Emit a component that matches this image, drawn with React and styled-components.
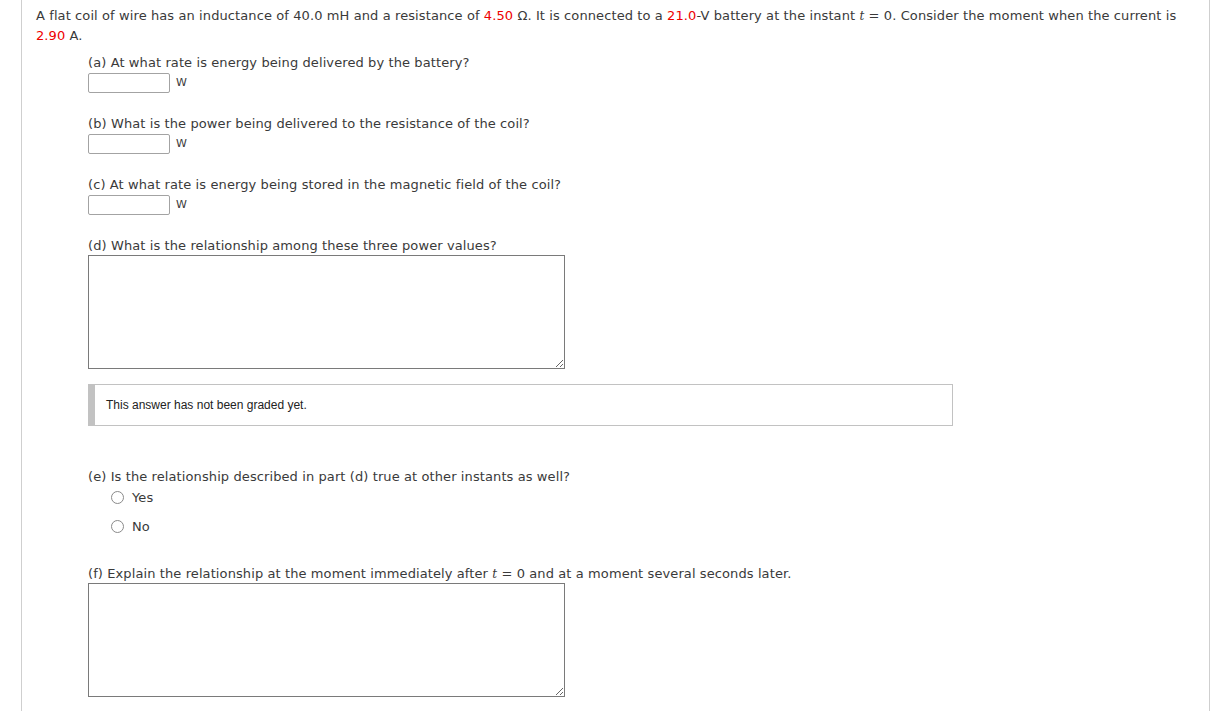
import React from "react";
import styled, { createGlobalStyle } from "styled-components";

const Global = createGlobalStyle`
  html, body { margin: 0; padding: 0; background: #fff; }
  body { font-family: Verdana, "DejaVu Sans", sans-serif; }
`;

const Page = styled.div`
  margin-left: 21px;
  width: 1189px;
  min-height: 711px;
  border-left: 1px solid #cfcfcf;
  border-right: 1px solid #cfcfcf;
  padding: 6px 24px 0 14px;
  box-sizing: border-box;
  font-size: 13px;
  line-height: 20px;
  letter-spacing: 0.1px;
  color: #3a3a3a;
`;

const Intro = styled.p`
  margin: 0;
`;

const Red = styled.span`
  color: #ee0000;
`;

const Ital = styled.i`
  font-style: italic;
  font-family: "DejaVu Serif", serif;
  font-size: 12px;
`;

const Parts = styled.div`
  margin: 7px 0 0 52px;
  display: flex;
  flex-direction: column;
`;

const Part = styled.div`
  margin-bottom: ${(p) => p.$gap ?? 21}px;
`;

const Label = styled.div`
  height: 20px;
`;

const AnswerRow = styled.div`
  display: flex;
  align-items: center;
  gap: 6px;
  height: 20px;
`;

const NumInput = styled.input`
  width: 82px;
  height: 20px;
  box-sizing: border-box;
  border: 1px solid #a3a3a3;
  border-radius: 2px;
  padding: 0 3px;
  margin: 0;
  font: inherit;
`;

const Unit = styled.span`
  font-size: 11px;
`;

const Essay = styled.textarea`
  display: block;
  width: 477px;
  height: 114px;
  box-sizing: border-box;
  border: 1px solid #7a7a7a;
  margin: -1px 0 0;
  padding: 2px;
  font: inherit;
  resize: both;
`;

const Graded = styled.div`
  margin-top: 15px;
  width: 865px;
  height: 42px;
  box-sizing: border-box;
  border: 1px solid #c2c2c2;
  border-left: 7px solid #c2c2c2;
  display: flex;
  align-items: center;
  padding-left: 11px;
  font-family: "Liberation Sans", Arial, sans-serif;
  font-size: 12px;
  letter-spacing: 0;
  color: #222;
`;

const Options = styled.div`
  display: flex;
  flex-direction: column;
  padding-left: 23px;
`;

const Option = styled.label`
  display: flex;
  align-items: center;
  gap: 8px;
  height: 29px;
  margin-top: ${(p) => (p.$first ? "-4px" : "0")};
`;

const Radio = styled.span`
  width: 11px;
  height: 11px;
  border: 1px solid #8a8a8a;
  border-radius: 50%;
  background: #fff;
  flex: none;
`;

export default function App() {
  return (
    <>
      <Global />
      <Page>
        <Intro>
          A flat coil of wire has an inductance of 40.0 mH and a resistance of <Red>4.50</Red> Ω. It is
          connected to a <Red>21.0</Red>-V battery at the instant <Ital>t</Ital> = 0. Consider the moment
          when the current is <Red>2.90</Red> A.
        </Intro>
        <Parts>
          <Part>
            <Label>(a) At what rate is energy being delivered by the battery?</Label>
            <AnswerRow>
              <NumInput type="text" />
              <Unit>W</Unit>
            </AnswerRow>
          </Part>
          <Part>
            <Label>(b) What is the power being delivered to the resistance of the coil?</Label>
            <AnswerRow>
              <NumInput type="text" />
              <Unit>W</Unit>
            </AnswerRow>
          </Part>
          <Part>
            <Label>(c) At what rate is energy being stored in the magnetic field of the coil?</Label>
            <AnswerRow>
              <NumInput type="text" />
              <Unit>W</Unit>
            </AnswerRow>
          </Part>
          <Part $gap={41}>
            <Label>(d) What is the relationship among these three power values?</Label>
            <Essay />
            <Graded>This answer has not been graded yet.</Graded>
          </Part>
          <Part $gap={23}>
            <Label>(e) Is the relationship described in part (d) true at other instants as well?</Label>
            <Options>
              <Option $first>
                <Radio />
                Yes
              </Option>
              <Option>
                <Radio />
                No
              </Option>
            </Options>
          </Part>
          <Part>
            <Label>
              (f) Explain the relationship at the moment immediately after <Ital>t</Ital> = 0 and at a moment
              several seconds later.
            </Label>
            <Essay />
          </Part>
        </Parts>
      </Page>
    </>
  );
}
